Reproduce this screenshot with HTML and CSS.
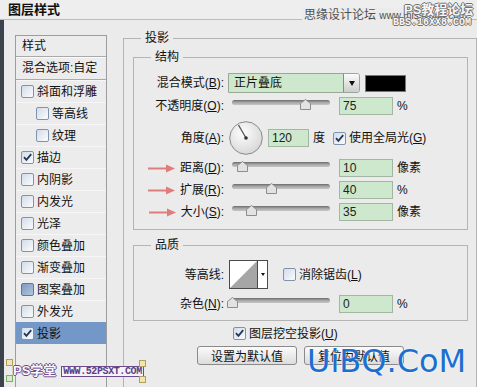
FILE: index.html
```html
<!DOCTYPE html>
<html>
<head>
<meta charset="utf-8">
<link rel="stylesheet" href="styles.css">
</head>
<body>
<div class="titlebar">图层样式</div>

<div class="main">
  <div class="strip"></div>

  <ul class="stylelist">
    <li class="head first">样式</li>
    <li class="head">混合选项:自定</li>
    <li><span class="cb"></span>斜面和浮雕</li>
    <li class="sub"><span class="cb"></span>等高线</li>
    <li class="sub"><span class="cb"></span>纹理</li>
    <li><span class="cb"><svg width="11" height="11" viewBox="0 0 11 11"><path d="M2 5.2 4.4 7.8 9.2 2.2" fill="none" stroke="#22385a" stroke-width="1.8"/></svg></span>描边</li>
    <li><span class="cb"></span>内阴影</li>
    <li><span class="cb"></span>内发光</li>
    <li><span class="cb"></span>光泽</li>
    <li><span class="cb"></span>颜色叠加</li>
    <li><span class="cb"></span>渐变叠加</li>
    <li><span class="cb hot"></span>图案叠加</li>
    <li><span class="cb"></span>外发光</li>
    <li class="sel"><span class="cb"><svg width="11" height="11" viewBox="0 0 11 11"><path d="M2 5.2 4.4 7.8 9.2 2.2" fill="none" stroke="#22385a" stroke-width="1.8"/></svg></span>投影</li>
  </ul>

  <fieldset class="panel">
    <legend>投影</legend>

    <fieldset class="group struct">
      <legend>结构</legend>

      <div class="row h20">
        <span class="lbl">混合模式(<u>B</u>):</span>
        <div class="select"><span class="val">正片叠底</span><span class="drop"></span></div>
        <div class="swatch"></div>
      </div>

      <div class="row h26">
        <span class="lbl">不透明度(<u>O</u>):</span>
        <div class="slider"><svg class="thumb" style="left:75%" width="11" height="11" viewBox="0 0 11 11"><path d="M5.5 0.5 10.5 4.5V10.5H0.5V4.5Z" fill="#e2e2e2" stroke="#8c8c8c"/></svg></div>
        <input class="num" type="text" value="75">
        <span class="unit">%</span>
      </div>

      <div class="row h38">
        <span class="lbl">角度(<u>A</u>):</span>
        <svg class="dial" width="34" height="34" viewBox="0 0 34 34">
          <defs>
            <radialGradient id="dg" cx="40%" cy="35%" r="70%">
              <stop offset="0" stop-color="#fdfdfd"/>
              <stop offset="1" stop-color="#d6d6d6"/>
            </radialGradient>
          </defs>
          <circle cx="17" cy="17" r="16.3" fill="url(#dg)" stroke="#8a8a8a"/>
          <line x1="17" y1="17" x2="9.5" y2="4" stroke="#555" stroke-width="1.3"/>
          <circle cx="17" cy="17" r="1.8" fill="#333"/>
        </svg>
        <input class="num angle" type="text" value="120">
        <span class="unit">度</span>
        <span class="cb global"><svg width="11" height="11" viewBox="0 0 11 11"><path d="M2 5.2 4.4 7.8 9.2 2.2" fill="none" stroke="#22385a" stroke-width="1.8"/></svg></span>
        <span>使用全局光(<u>G</u>)</span>
      </div>

      <div class="row h22">
        <span class="lbl"><svg class="arrow" width="27" height="9" viewBox="0 0 27 9"><path d="M0 4.5H20" stroke="#e07c7c" stroke-width="2"/><path d="M18 0.5 27 4.5 18 8.5Z" fill="#e07c7c"/></svg>距离(<u>D</u>):</span>
        <div class="slider"><svg class="thumb" style="left:11%" width="11" height="11" viewBox="0 0 11 11"><path d="M5.5 0.5 10.5 4.5V10.5H0.5V4.5Z" fill="#e2e2e2" stroke="#8c8c8c"/></svg></div>
        <input class="num" type="text" value="10">
        <span class="unit">像素</span>
      </div>

      <div class="row h22">
        <span class="lbl"><svg class="arrow" width="27" height="9" viewBox="0 0 27 9"><path d="M0 4.5H20" stroke="#e07c7c" stroke-width="2"/><path d="M18 0.5 27 4.5 18 8.5Z" fill="#e07c7c"/></svg>扩展(<u>R</u>):</span>
        <div class="slider"><svg class="thumb" style="left:40%" width="11" height="11" viewBox="0 0 11 11"><path d="M5.5 0.5 10.5 4.5V10.5H0.5V4.5Z" fill="#e2e2e2" stroke="#8c8c8c"/></svg></div>
        <input class="num" type="text" value="40">
        <span class="unit">%</span>
      </div>

      <div class="row h22">
        <span class="lbl"><svg class="arrow" width="27" height="9" viewBox="0 0 27 9"><path d="M0 4.5H20" stroke="#e07c7c" stroke-width="2"/><path d="M18 0.5 27 4.5 18 8.5Z" fill="#e07c7c"/></svg>大小(<u>S</u>):</span>
        <div class="slider"><svg class="thumb" style="left:20%" width="11" height="11" viewBox="0 0 11 11"><path d="M5.5 0.5 10.5 4.5V10.5H0.5V4.5Z" fill="#e2e2e2" stroke="#8c8c8c"/></svg></div>
        <input class="num" type="text" value="35">
        <span class="unit">像素</span>
      </div>
    </fieldset>

    <fieldset class="group quality">
      <legend>品质</legend>

      <div class="row h29">
        <span class="lbl">等高线:</span>
        <div class="contour">
          <svg class="curve" width="27" height="27" viewBox="0 0 27 27"><path d="M0 27 27 0V27Z" fill="#a6a6a6"/></svg>
          <span class="cdrop"></span>
        </div>
        <span class="cb aa"></span>
        <span>消除锯齿(<u>L</u>)</span>
      </div>

      <div class="row h29">
        <span class="lbl">杂色(<u>N</u>):</span>
        <div class="slider"><svg class="thumb" style="left:0%" width="11" height="11" viewBox="0 0 11 11"><path d="M5.5 0.5 10.5 4.5V10.5H0.5V4.5Z" fill="#e2e2e2" stroke="#8c8c8c"/></svg></div>
        <input class="num" type="text" value="0">
        <span class="unit">%</span>
      </div>
    </fieldset>

    <div class="knockout">
      <span class="cb"><svg width="11" height="11" viewBox="0 0 11 11"><path d="M2 5.2 4.4 7.8 9.2 2.2" fill="none" stroke="#22385a" stroke-width="1.8"/></svg></span>
      <span>图层挖空投影(<u>U</u>)</span>
    </div>

    <div class="buttons">
      <button class="btn first">设置为默认值</button>
      <button class="btn">复位为默认值</button>
    </div>
  </fieldset>
</div>

<!-- watermarks -->
<div class="wm-sy">思缘设计论坛 <span class="www">www.missyuan.com</span></div>
<div class="wm-ps">PS教程论坛</div>
<div class="wm-bbs">BBS.16XX8.COM</div>

<div class="wm-xt"><span class="xt-name">PS学堂</span><span class="xt-url">WWW.52PSXT.COM</span></div>
<span class="mark m1"></span>
<span class="mark m2"></span>
<span class="mark m3"></span>
<span class="mark m4"></span>

<div class="wm-uibq">UiBQ.CoM</div>
</body>
</html>
```

FILE: styles.css
```css
body {
  margin: 0;
  width: 477px;
  height: 387px;
  overflow: hidden;
  position: relative;
  background: #ebebeb;
  color: #111;
  font-family: "Liberation Sans", "Noto Sans CJK SC", sans-serif;
  font-size: 12px;
  line-height: 14px;
}

u { text-decoration: underline; }

.titlebar {
  height: 19px;
  line-height: 19px;
  padding-left: 8px;
  font-size: 13px;
  font-weight: bold;
  background: #eeeeee;
  border-bottom: 1px solid #bcbcbc;
}

.main {
  display: flex;
  align-items: flex-start;
  height: 367px;
  overflow: hidden;
}

.strip {
  width: 4px;
  align-self: stretch;
  background: #3b444d;
  flex: none;
}

/* left list of styles */
.stylelist {
  list-style: none;
  margin: 15px 0 0 11px;
  padding: 0;
  width: 90px;
  height: 351px;
  flex: none;
  border: 1px solid #9d9d9d;
  border-bottom: none;
  background: #ececec;
}
.stylelist li {
  height: 22px;
  box-sizing: border-box;
  display: flex;
  align-items: center;
  padding-left: 5px;
  white-space: nowrap;
  border-top: 1px solid #f6f6f6;
}
.stylelist li.head {
  padding-left: 6px;
  height: 23px;
  border-top: none;
  border-bottom: 1px solid #a9a9a9;
  box-shadow: 0 1px 0 #fbfbfb;
}
.stylelist li.head.first { height: 21px; }
.stylelist li.sub { padding-left: 20px; }
.stylelist li.sel { background: #7398c8; border-top-color: #7398c8; }

.cb {
  width: 13px;
  height: 13px;
  box-sizing: border-box;
  flex: none;
  display: inline-flex;
  margin-right: 3px;
  border: 1px solid #7f93ae;
  border-radius: 2px;
  background: linear-gradient(135deg, #d3dce9, #fbfcfd);
}
.cb svg { display: block; }
.cb.hot { background: linear-gradient(135deg, #7d98c0, #b4c6de); border-color: #5f7698; }

/* right side panel */
.panel {
  margin: 11px 0 0 16px;
  padding: 5px 0 0 9px;
  border: 1px solid #b4b4b4;
  border-bottom: none;
  box-sizing: border-box;
  width: 354px;
  height: 356px;
  min-width: 0;
  flex: none;
}
.panel legend {
  font-size: 12px;
  line-height: 14px;
  padding: 0 4px;
  margin-left: 8px;
}

.group {
  margin: 0;
  padding: 9px 0 6px 0;
  border: 1px solid #b4b4b4;
  box-sizing: border-box;
  width: 335px;
  min-width: 0;
}
.group legend { margin-left: 17px; }
.quality { margin-top: 8px; padding: 8px 0 2px 0; }

.row {
  display: flex;
  align-items: center;
  white-space: nowrap;
}
.h20 { height: 20px; }
.h22 { height: 22px; }
.h26 { height: 26px; }
.h29 { height: 29px; }
.h38 { height: 38px; }

.lbl {
  width: 90px;
  flex: none;
  display: flex;
  justify-content: flex-end;
  align-items: center;
}
.arrow { margin-right: 5px; display: block; }

.select {
  display: flex;
  margin-left: 4px;
  width: 132px;
  height: 20px;
  box-sizing: border-box;
  border: 1px solid #97a897;
  border-radius: 0 3px 3px 0;
  background: #cde8cd;
}
.select .val { flex: 1; padding-left: 5px; line-height: 18px; }
.select .drop {
  width: 15px;
  border-left: 1px solid #8a8a8a;
  border-radius: 0 2px 2px 0;
  background: linear-gradient(#fbfbfb, #cdcdcd);
  display: flex;
  align-items: center;
  justify-content: center;
}
.select .drop::after,
.contour .cdrop::after {
  content: "";
  border-left: 3.5px solid transparent;
  border-right: 3.5px solid transparent;
  border-top: 5px solid #111;
}

.swatch {
  margin-left: 5px;
  width: 41px;
  height: 17px;
  box-sizing: border-box;
  background: #000;
  border: 1px solid #777;
}

.slider {
  position: relative;
  margin-left: 8px;
  width: 98px;
  height: 12px;
  flex: none;
}
.slider::before {
  content: "";
  position: absolute;
  left: 0;
  right: 0;
  top: 0;
  height: 5px;
  border-radius: 3px;
  background: linear-gradient(#6c6c6c, #a8a8a8 50%, #c6c6c6);
}
.thumb {
  position: absolute;
  top: -1px;
  margin-left: -5.5px;
  display: block;
}

.num {
  margin: 0 0 0 9px;
  width: 54px;
  height: 18px;
  box-sizing: border-box;
  padding: 0 3px;
  border: 1px solid #a3b5a3;
  background: #cde8cd;
  color: #222;
  font: 12px "Liberation Sans", sans-serif;
  outline: none;
}
.num.angle { width: 41px; margin-left: 5px; }
.unit { margin-left: 4px; }

.dial { margin-left: 5px; display: block; flex: none; }
.cb.global { margin-left: 8px; }

.contour {
  display: flex;
  margin-left: 5px;
  height: 29px;
  box-sizing: border-box;
  border: 1px solid #4a4a4a;
  background: #fff;
}
.curve { display: block; border-right: 1px solid #4a4a4a; }
.contour .cdrop {
  width: 9px;
  display: flex;
  align-items: center;
  justify-content: center;
}
.contour .cdrop::after {
  border-left-width: 2.5px;
  border-right-width: 2.5px;
  border-top-width: 3px;
}
.cb.aa { margin-left: 15px; }

.knockout {
  display: flex;
  align-items: center;
  margin: 6px 0 0 100px;
  height: 13px;
  white-space: nowrap;
}

.buttons {
  display: flex;
  gap: 7px;
  margin: 6px 0 0 64px;
}
.btn {
  width: 100px;
  height: 19px;
  padding: 0;
  border: 1px solid #8a8a8a;
  border-radius: 3px;
  background: linear-gradient(#fbfbfb, #dcdcdc);
  color: #111;
  font: 12px "Noto Sans CJK SC", sans-serif;
  line-height: 16px;
}

/* watermarks laid over the screenshot */
.wm-sy {
  position: absolute;
  left: 302px;
  top: 8px;
  padding: 0 2px;
  background: #ebebeb;
  color: #505050;
  white-space: nowrap;
}
.wm-sy .www { font-size: 10px; }
.wm-ps {
  position: absolute;
  left: 404px;
  top: 2px;
  font-size: 13px;
  line-height: 15px;
  font-weight: bold;
  color: #f6f6f6;
  text-shadow: 1px 0 #707070, -1px 0 #707070, 0 1px #707070, 0 -1px #707070;
}
.wm-bbs {
  position: absolute;
  left: 393px;
  top: 17px;
  font: bold 10px/12px "Liberation Mono", monospace;
  color: #f6f6f6;
  text-shadow: 1px 0 #707070, -1px 0 #707070, 0 1px #707070, 0 -1px #707070;
}

.wm-xt {
  position: absolute;
  left: 13px;
  top: 364px;
  display: flex;
  align-items: center;
  gap: 5px;
  white-space: nowrap;
}
.xt-name {
  font-size: 13px;
  font-weight: bold;
  color: #fbf8ff;
  text-shadow: 1px 0 #6b4b8b, -1px 0 #6b4b8b, 0 1px #6b4b8b, 0 -1px #6b4b8b;
}
.xt-url {
  padding: 0 1px;
  border: 1px solid #6b4b8b;
  background: #f6f2fa;
  color: #5b3f7f;
  font: bold 10px/9px "Liberation Mono", monospace;
  letter-spacing: -0.4px;
}
.mark {
  position: absolute;
  width: 5px;
  height: 5px;
  border: 1px solid #b59e55;
  background: #efe6b8;
}
.m1 { left: 6px; top: 359px; }
.m2 { left: 6px; top: 375px; border-color: #7fae6a; background: #d6ecc8; }
.m3 { left: 139px; top: 360px; }
.m4 { left: 139px; top: 376px; }

.wm-uibq {
  position: absolute;
  left: 307px;
  top: 345px;
  font: 32px/32px "DejaVu Sans", sans-serif;
  color: #1c6fd1;
  text-shadow: 0 0 2px #fff;
  white-space: nowrap;
}
```
